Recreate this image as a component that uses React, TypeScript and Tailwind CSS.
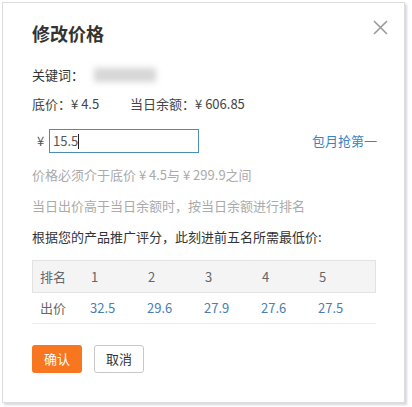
import React from 'react';

const ranks = [
  { rank: '1', price: '32.5' },
  { rank: '2', price: '29.6' },
  { rank: '3', price: '27.9' },
  { rank: '4', price: '27.6' },
  { rank: '5', price: '27.5' },
];

const App: React.FC = () => {
  return (
    <div
      className="w-[412px] h-[407px] bg-white pl-[2px] pt-[2px]"
      style={{ fontFamily: '"Noto Sans CJK SC", "Liberation Sans", sans-serif' }}
    >
      {/* Dialog */}
      <div className="relative w-[403px] h-[401px] bg-white border border-[#dcdcdc] shadow-[2px_2px_2px_rgba(160,170,200,0.45)] pl-[29px] pr-[28px]">
        {/* Close */}
        <button type="button" className="absolute right-[16px] top-[17px] text-[#9a9a9a]">
          <svg width="15" height="15" viewBox="0 0 15 15" fill="none" stroke="currentColor" strokeWidth="1.6">
            <path d="M1 1L14 14M14 1L1 14" />
          </svg>
        </button>

        {/* Title */}
        <h2 className="mt-[18px] h-[24px] leading-[24px] text-[18px] font-bold text-[#333]">修改价格</h2>

        {/* Keyword */}
        <div className="mt-[20px] h-[20px] flex items-center text-[13px] text-[#333]">
          <span>关键词：</span>
          <div className="ml-[10px] w-[62px] h-[14px] bg-[#d6d6d6] blur-[3px]"></div>
        </div>

        {/* Base price / balance */}
        <div className="mt-[9px] h-[20px] flex items-center text-[13px] text-[#444]">
          <span className="w-[98px]">底价：¥ 4.5</span>
          <span>当日余额：¥ 606.85</span>
        </div>

        {/* Price input */}
        <div className="mt-[15px] h-[24px] flex items-center text-[13px]">
          <span className="ml-[5px] w-[12px] text-[#555]">¥</span>
          <div className="w-[150px] h-[24px] border border-[#4a8db5] flex items-center pl-[3px] text-[#555]">
            <span>15.5</span>
            <span className="w-px h-[15px] bg-[#222]"></span>
          </div>
          <a href="#" className="ml-auto mr-[-1px] text-[#3b82c4]">包月抢第一</a>
        </div>

        {/* Hints */}
        <p className="mt-[12px] h-[20px] leading-[20px] text-[13px] text-[#aaa]">价格必须介于底价 ¥ 4.5与 ¥ 299.9之间</p>
        <p className="mt-[11px] h-[20px] leading-[20px] text-[13px] text-[#aaa]">当日出价高于当日余额时，按当日余额进行排名</p>
        <p className="mt-[11px] h-[20px] leading-[20px] text-[13px] text-[#333]">根据您的产品推广评分，此刻进前五名所需最低价:</p>

        {/* Ranking table */}
        <div className="mt-[13px] w-[344px] text-[13px]">
          <div className="grid grid-cols-[58px_57px_57px_57px_57px_1fr] h-[33px] items-center bg-[#f4f4f4] border border-[#e2e2e2] text-[#666]">
            <span className="pl-[7px]">排名</span>
            {ranks.map((r) => (
              <span key={r.rank}>{r.rank}</span>
            ))}
          </div>
          <div className="grid grid-cols-[58px_57px_57px_57px_57px_1fr] h-[31px] items-center border-b border-[#ececec]">
            <span className="pl-[8px] text-[#666]">出价</span>
            {ranks.map((r) => (
              <span key={r.rank} className="text-[#4a7db3]">{r.price}</span>
            ))}
          </div>
        </div>

        {/* Actions */}
        <div className="mt-[21px] flex gap-[12px] text-[13px]">
          <button type="button" className="w-[50px] h-[28px] rounded-[3px] bg-[#f7761f] text-white">确认</button>
          <button type="button" className="w-[50px] h-[28px] rounded-[3px] bg-white border border-[#c8c8c8] text-[#333]">取消</button>
        </div>
      </div>
    </div>
  );
};

export default App;
